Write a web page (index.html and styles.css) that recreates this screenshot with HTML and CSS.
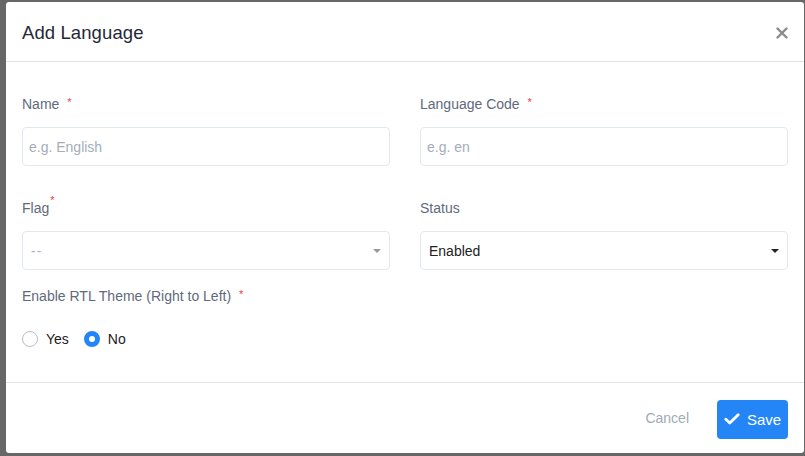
FILE: index.html
```html
<!DOCTYPE html>
<html>
<head>
<meta charset="utf-8">
<link rel="stylesheet" href="styles.css">
</head>
<body>
<div class="modal">
  <div class="modal-header">
    <h4 class="modal-title">Add Language</h4>
    <button class="close" aria-label="Close">
      <svg width="12" height="12" viewBox="0 0 12 12"><path d="M1.5 1.5 L10.5 10.5 M10.5 1.5 L1.5 10.5" stroke="#8a8a8a" stroke-width="2.4" stroke-linecap="round"/></svg>
    </button>
  </div>
  <div class="modal-body">
    <div class="grid">
      <div class="field">
        <label class="label">Name <span class="req">*</span></label>
        <div class="input placeholder">e.g. English</div>
      </div>
      <div class="field">
        <label class="label">Language Code <span class="req">*</span></label>
        <div class="input placeholder">e.g. en</div>
      </div>
      <div class="field">
        <label class="label">Flag<span class="req sup">*</span></label>
        <div class="input select muted"><span class="dash">--</span><span class="caret caret-gray"></span></div>
      </div>
      <div class="field">
        <label class="label">Status</label>
        <div class="input select"><span>Enabled</span><span class="caret"></span></div>
      </div>
    </div>
    <div class="field rtl">
      <label class="label">Enable RTL Theme (Right to Left) <span class="req">*</span></label>
      <div class="radios">
        <label class="radio"><span class="circle"></span>Yes</label>
        <label class="radio"><span class="circle checked"></span>No</label>
      </div>
    </div>
  </div>
  <div class="modal-footer">
    <button class="btn-cancel">Cancel</button>
    <button class="btn-save">
      <svg width="16" height="12" viewBox="0 0 16 12"><path d="M1.8 6.2 L5.8 10 L14.2 1.8" fill="none" stroke="#fff" stroke-width="2.8" stroke-linecap="round" stroke-linejoin="round"/></svg>
      Save
    </button>
  </div>
</div>
</body>
</html>
```
FILE: styles.css
```css
* { box-sizing: border-box; }
html, body { margin: 0; padding: 0; }
body {
  background: #676767;
  font-family: "Liberation Sans", Arial, sans-serif;
  width: 805px;
  height: 456px;
  overflow: hidden;
  padding: 2px 0 0 6px;
}
.modal {
  width: 798px;
  height: 451px;
  background: #fff;
  border-radius: 3px;
  display: flex;
  flex-direction: column;
}
.modal-header {
  height: 60px;
  padding: 0 16px;
  display: flex;
  align-items: center;
  justify-content: space-between;
  border-bottom: 1px solid #e3e3e3;
}
.modal-title {
  margin: 0;
  font-size: 18.5px;
  font-weight: normal;
  color: #1f2937;
  letter-spacing: 0.1px;
  padding-top: 2px;
}
.close {
  background: none;
  border: 0;
  padding: 0;
  width: 12px;
  height: 12px;
  display: flex;
  margin-top: 2px;
}
.modal-body {
  flex: 1;
  padding: 32px 16px 0;
}
.grid {
  display: grid;
  grid-template-columns: 1fr 1fr;
  column-gap: 30px;
  row-gap: 32px;
}
.label {
  display: block;
  font-size: 14px;
  line-height: 20px;
  color: #5f6a7c;
  height: 20px;
}
.req {
  color: #e53e3e;
  font-size: 11px;
  margin-left: 4px;
  vertical-align: 3px;
  line-height: 0;
}
.sup {
  margin-left: 1px;
  position: relative;
  top: -6px;
}
.input {
  margin-top: 13px;
  height: 39px;
  border: 1px solid #e2e8f0;
  border-radius: 4px;
  padding: 0 6px;
  display: flex;
  align-items: center;
  font-size: 14px;
  color: #222;
}
.placeholder { color: #a3adbd; }
.select { justify-content: space-between; padding: 0 8px 0 8px; }
.dash { color: #aab2bf; letter-spacing: 1px; }
.caret {
  width: 0; height: 0;
  border-left: 4.5px solid transparent;
  border-right: 4.5px solid transparent;
  border-top: 4.5px solid #222;
}
.caret-gray { border-top-color: #999; }
.rtl { margin-top: 16px; }
.radios {
  display: flex;
  align-items: center;
  gap: 15px;
  margin-top: 25px;
}
.radio {
  display: flex;
  align-items: center;
  font-size: 14px;
  color: #222;
}
.circle {
  width: 16px;
  height: 16px;
  border-radius: 50%;
  border: 1px solid #b8bcc4;
  margin-right: 8px;
  display: inline-block;
}
.circle.checked {
  border: 5px solid #2385f6;
  background: #fff;
}
.modal-footer {
  height: 71px;
  border-top: 1px solid #e3e3e3;
  display: flex;
  align-items: center;
  justify-content: flex-end;
  padding: 0 16px 0 0;
}
.btn-cancel {
  background: none;
  border: 0;
  font-family: inherit;
  font-size: 14px;
  color: #a0aab8;
  margin-right: 28px;
  padding: 0;
}
.btn-save {
  background: #2385f6;
  border: 0;
  border-radius: 4px;
  color: #fff;
  font-family: inherit;
  font-size: 15px;
  height: 39px;
  width: 71px;
  display: flex;
  align-items: center;
  justify-content: center;
  gap: 7px;
  padding: 0;
  margin-top: 2px;
}
```
